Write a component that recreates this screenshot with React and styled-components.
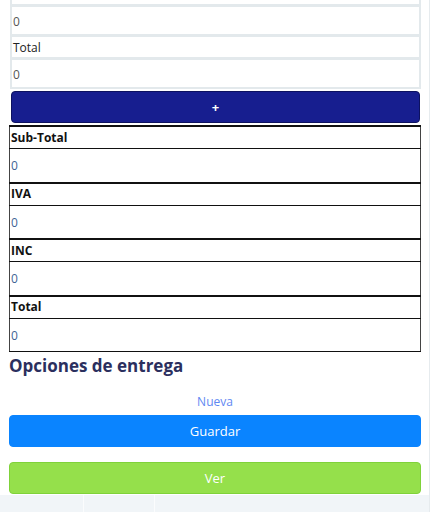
import React from 'react';
import styled, { createGlobalStyle } from 'styled-components';

const GlobalStyle = createGlobalStyle`
  html, body {
    margin: 0;
    padding: 0;
    background: #ffffff;
  }
  body {
    font-family: "Open Sans", "DejaVu Sans", sans-serif;
    color: #212529;
  }
`;

const Page = styled.div`
  width: 429px;
  border-right: 1px solid #e6ebee;
  background: #ffffff;
`;

const Content = styled.main`
  padding: 0 8px 0 9px;
`;

const Fields = styled.div`
  display: flex;
  flex-direction: column;
  padding: 0 0 0 1px;
`;

const Box = styled.div`
  box-sizing: border-box;
  height: ${(p) => p.$h}px;
  border: 2px solid #e3e9ec;
  border-top: ${(p) => (p.$cut ? 'none' : '')};
  margin-top: ${(p) => (p.$cut ? 0 : -1)}px;
  background: #ffffff;
  display: flex;
  align-items: center;
  padding: 1px 0 0 1px;
  font-size: 12px;
  color: ${(p) => (p.$label ? '#222' : '#555')};
`;

const AddButton = styled.button`
  margin: 2px 1px 2px 1px;
  height: 32px;
  border: 1px solid #0d1260;
  border-radius: 4px;
  background: #171e8f;
  color: #ffffff;
  font-size: 13px;
  font-weight: 700;
  font-family: inherit;
  cursor: pointer;
`;

const Table = styled.table`
  width: 100%;
  border-collapse: collapse;
  border: 1px solid #444;
`;

const Head = styled.th`
  height: 21px;
  padding: 0 0 0 1px;
  text-align: left;
  font-size: 12px;
  line-height: 16px;
  font-weight: 700;
  color: #111;
  border-top: 2px solid #111;
  border-bottom: 1px solid #111;
`;

const Value = styled.td`
  height: 30.5px;
  padding: 2px 0 0 1px;
  font-size: 12px;
  line-height: 16px;
  color: #3f6395;
  border-top: 1px solid #111;
  border-bottom: 1px solid #111;
`;

const Heading = styled.h3`
  margin: 2px 0 0 0;
  font-size: 17px;
  line-height: 24px;
  font-weight: 700;
  color: #2b2f5e;
`;

const LinkText = styled.a`
  display: block;
  margin-top: 15px;
  text-align: center;
  font-size: 12px;
  line-height: 18px;
  color: #5f88f2;
  text-decoration: none;
`;

const Action = styled.button`
  display: block;
  width: 100%;
  height: 32px;
  margin-top: ${(p) => p.$mt}px;
  border: 1px solid ${(p) => p.$edge};
  border-radius: 4px;
  background: ${(p) => p.$bg};
  color: #ffffff;
  font-size: 13px;
  font-family: inherit;
  cursor: pointer;
`;

const BottomBar = styled.div`
  height: 18px;
  margin-top: 1px;
  background: #f1f5f8;
  display: flex;
  padding-left: 83px;
`;

const Tab = styled.div`
  width: 70px;
  border-left: 1px solid #fbfcfd;
  &:last-child {
    border-right: 1px solid #fbfcfd;
  }
`;

const totals = ['Sub-Total', 'IVA', 'INC', 'Total'];

const App = () => {
  return (
    <>
      <GlobalStyle />
      <Page>
        <Content>
          <Fields>
            <Box $h={6} $cut />
            <Box $h={31}>0</Box>
            <Box $h={24} $label>
              Total
            </Box>
            <Box $h={31}>0</Box>
            <AddButton>+</AddButton>
          </Fields>
          <Table>
            <tbody>
              {totals.map((name) => (
                <React.Fragment key={name}>
                  <tr>
                    <Head>{name}</Head>
                  </tr>
                  <tr>
                    <Value>0</Value>
                  </tr>
                </React.Fragment>
              ))}
            </tbody>
          </Table>
          <Heading>Opciones de entrega</Heading>
          <LinkText href="#">Nueva</LinkText>
          <Action $bg="#0a84ff" $edge="#0a84ff" $mt={4}>
            Guardar
          </Action>
          <Action $bg="#95e04b" $edge="#7fd23a" $mt={15}>
            Ver
          </Action>
        </Content>
        <BottomBar>
          <Tab />
        </BottomBar>
      </Page>
    </>
  );
};

export default App;
